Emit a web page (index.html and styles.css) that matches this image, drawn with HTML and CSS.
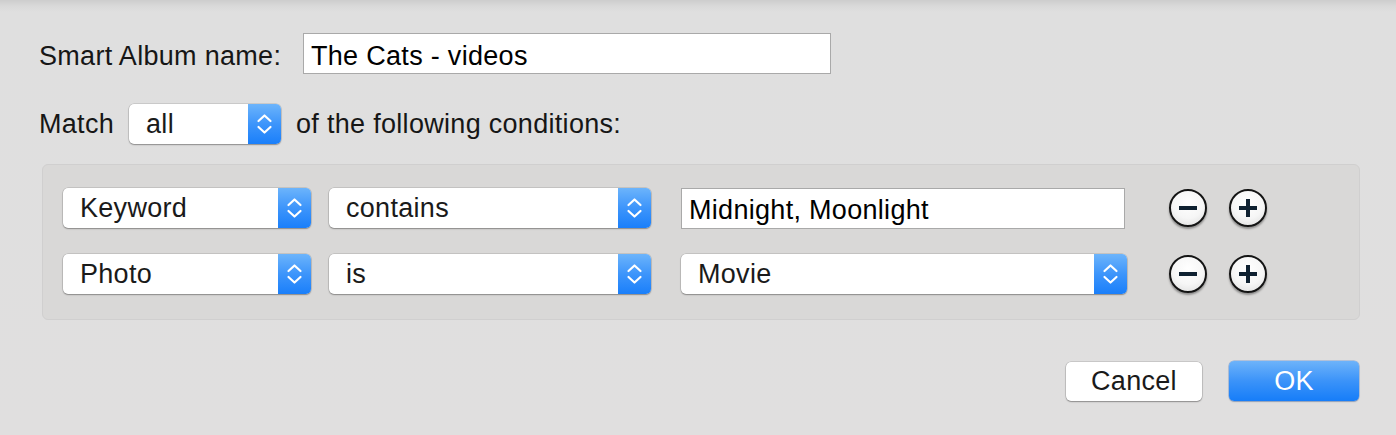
FILE: index.html
```html
<!DOCTYPE html>
<html>
<head>
<meta charset="utf-8">
<link rel="stylesheet" href="styles.css">
</head>
<body>
<div class="sheet">
  <div class="row name-row">
    <span class="label name-label">Smart Album name:</span>
    <div class="field name-field">The Cats - videos</div>
  </div>
  <div class="row match-row">
    <span class="label">Match</span>
    <div class="popup match-popup"><span class="popup-text">all</span><span class="stepper"><svg width="33" height="40" viewBox="0 0 33 40"><path d="M10.5 17 L16.5 11.5 L22.5 17" fill="none" stroke="#fff" stroke-width="2.2" stroke-linecap="round" stroke-linejoin="round"/><path d="M10.5 23 L16.5 28.5 L22.5 23" fill="none" stroke="#fff" stroke-width="2.2" stroke-linecap="round" stroke-linejoin="round"/></svg></span></div>
    <span class="label">of the following conditions:</span>
  </div>
  <div class="conditions">
    <div class="cond-row">
      <div class="popup p-key"><span class="popup-text">Keyword</span><span class="stepper"><svg width="33" height="40" viewBox="0 0 33 40"><path d="M10.5 17 L16.5 11.5 L22.5 17" fill="none" stroke="#fff" stroke-width="2.2" stroke-linecap="round" stroke-linejoin="round"/><path d="M10.5 23 L16.5 28.5 L22.5 23" fill="none" stroke="#fff" stroke-width="2.2" stroke-linecap="round" stroke-linejoin="round"/></svg></span></div>
      <div class="popup p-op"><span class="popup-text">contains</span><span class="stepper"><svg width="33" height="40" viewBox="0 0 33 40"><path d="M10.5 17 L16.5 11.5 L22.5 17" fill="none" stroke="#fff" stroke-width="2.2" stroke-linecap="round" stroke-linejoin="round"/><path d="M10.5 23 L16.5 28.5 L22.5 23" fill="none" stroke="#fff" stroke-width="2.2" stroke-linecap="round" stroke-linejoin="round"/></svg></span></div>
      <div class="field value-field">Midnight, Moonlight</div>
      <div class="round-btns">
        <span class="round-btn"><span class="bar-h"></span></span>
        <span class="round-btn"><span class="bar-h"></span><span class="bar-v"></span></span>
      </div>
    </div>
    <div class="cond-row">
      <div class="popup p-key"><span class="popup-text">Photo</span><span class="stepper"><svg width="33" height="40" viewBox="0 0 33 40"><path d="M10.5 17 L16.5 11.5 L22.5 17" fill="none" stroke="#fff" stroke-width="2.2" stroke-linecap="round" stroke-linejoin="round"/><path d="M10.5 23 L16.5 28.5 L22.5 23" fill="none" stroke="#fff" stroke-width="2.2" stroke-linecap="round" stroke-linejoin="round"/></svg></span></div>
      <div class="popup p-op"><span class="popup-text">is</span><span class="stepper"><svg width="33" height="40" viewBox="0 0 33 40"><path d="M10.5 17 L16.5 11.5 L22.5 17" fill="none" stroke="#fff" stroke-width="2.2" stroke-linecap="round" stroke-linejoin="round"/><path d="M10.5 23 L16.5 28.5 L22.5 23" fill="none" stroke="#fff" stroke-width="2.2" stroke-linecap="round" stroke-linejoin="round"/></svg></span></div>
      <div class="popup p-val"><span class="popup-text">Movie</span><span class="stepper"><svg width="33" height="40" viewBox="0 0 33 40"><path d="M10.5 17 L16.5 11.5 L22.5 17" fill="none" stroke="#fff" stroke-width="2.2" stroke-linecap="round" stroke-linejoin="round"/><path d="M10.5 23 L16.5 28.5 L22.5 23" fill="none" stroke="#fff" stroke-width="2.2" stroke-linecap="round" stroke-linejoin="round"/></svg></span></div>
      <div class="round-btns">
        <span class="round-btn"><span class="bar-h"></span></span>
        <span class="round-btn"><span class="bar-h"></span><span class="bar-v"></span></span>
      </div>
    </div>
  </div>
  <div class="buttons">
    <div class="btn cancel">Cancel</div>
    <div class="btn ok">OK</div>
  </div>
</div>
</body>
</html>
```
FILE: styles.css
```css
html, body {
  margin: 0;
  padding: 0;
}
body {
  width: 1396px;
  height: 435px;
  overflow: hidden;
  background: linear-gradient(to bottom, #cdcdcd 0px, #d9d9d9 6px, #dfdfdf 12px, #e0dfdf 100%);
  font-family: "Liberation Sans", Arial, sans-serif;
  font-size: 27px;
  letter-spacing: 0.3px;
  color: #161616;
}
.sheet {
  padding: 33px 36px 0 39px;
}
.row {
  display: flex;
  align-items: center;
}
.label {
  white-space: nowrap;
  line-height: 1;
}
.name-row {
  height: 41px;
}
.name-label {
  width: 264px;
  padding-top: 6px;
}
.field {
  box-sizing: border-box;
  background: #fff;
  border: 1px solid #a9a9a9;
  height: 41px;
  display: flex;
  align-items: center;
  padding-left: 7px;
  padding-top: 5px;
  color: #000;
  line-height: 1;
}
.name-field {
  width: 528px;
}
.match-row {
  margin-top: 30px;
  height: 40px;
}
.popup {
  box-sizing: border-box;
  height: 40px;
  background: #fff;
  border-radius: 5px;
  box-shadow: 0 0 0 0.5px rgba(0,0,0,0.18), 0 1px 1.5px rgba(0,0,0,0.3);
  display: flex;
  align-items: center;
  justify-content: space-between;
  overflow: hidden;
  line-height: 1;
}
.popup-text {
  padding-left: 17px;
  padding-top: 1px;
  color: #1a1a1a;
}
.stepper {
  width: 33px;
  height: 40px;
  flex: none;
  background: linear-gradient(to bottom, #6cb4fb 0%, #3d95fb 50%, #1a7ffa 100%);
  display: block;
}
.stepper svg {
  display: block;
}
.match-popup {
  width: 152px;
  margin-left: 15px;
  margin-right: 15px;
}
.conditions {
  box-sizing: border-box;
  margin: 20px 0 0 3px;
  width: 1318px;
  height: 156px;
  background: #d9d8d7;
  border: 1px solid #d0cfcf;
  border-radius: 6px;
  padding: 23px 0 0 20px;
  display: flex;
  flex-direction: column;
  gap: 26px;
}
.cond-row {
  display: flex;
  align-items: center;
  height: 40px;
}
.p-key {
  width: 248px;
  margin-right: 18px;
}
.p-op {
  width: 322px;
  margin-right: 30px;
}
.value-field {
  width: 444px;
  margin-right: 2px;
}
.p-val {
  width: 446px;
}
.round-btns {
  display: flex;
  gap: 22px;
  margin-left: 42px;
}
.round-btn {
  box-sizing: border-box;
  width: 38px;
  height: 38px;
  border-radius: 50%;
  border: 2px solid #141414;
  background: radial-gradient(circle at 50% 35%, #ffffff 0%, #f6f6f6 55%, #dcdcdc 100%);
  box-shadow: 0 2px 2px rgba(0,0,0,0.35);
  position: relative;
  display: block;
}
.bar-h {
  position: absolute;
  left: 8px;
  top: 15px;
  width: 18px;
  height: 4px;
  background: #0f2131;
}
.bar-v {
  position: absolute;
  left: 15px;
  top: 8px;
  width: 4px;
  height: 18px;
  background: #0f2131;
}
.buttons {
  display: flex;
  justify-content: flex-end;
  align-items: center;
  margin-top: 41px;
  gap: 27px;
  padding-right: 1px;
}
.btn {
  box-sizing: border-box;
  height: 39px;
  border-radius: 5px;
  display: flex;
  align-items: center;
  justify-content: center;
  line-height: 1;
  padding-top: 1px;
}
.cancel {
  width: 136px;
  background: #fff;
  color: #1a1a1a;
  box-shadow: 0 0 0 0.5px rgba(0,0,0,0.2), 0 1px 1.5px rgba(0,0,0,0.3);
}
.ok {
  width: 130px;
  height: 40px;
  color: #fff;
  background: linear-gradient(to bottom, #6db3fa 0%, #3b93f9 50%, #167df9 100%);
  box-shadow: 0 0 0 0.5px rgba(0,80,200,0.4), 0 1px 1.5px rgba(0,0,0,0.2);
}
```
